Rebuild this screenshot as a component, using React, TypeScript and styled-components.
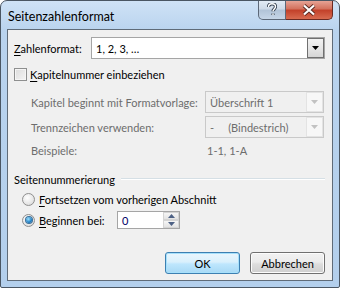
import React from 'react';
import styled, { createGlobalStyle } from 'styled-components';

const GlobalStyle = createGlobalStyle`
	html, body {
		margin: 0;
		padding: 0;
		background: #ffffff;
	}
	body {
		font-family: Lato, "Noto Sans", sans-serif;
		font-size: 11px;
		color: #000;
	}
`;

const Window = styled.div`
	width: 340px;
	height: 288px;
	box-sizing: border-box;
	border: 1px solid #4a5663;
	border-radius: 7px 7px 2px 2px;
	background: linear-gradient(180deg, #cfe2f6 0%, #b9d3ee 30px, #b3cfec 100%);
	padding: 0 6px 6px 6px;
	display: flex;
	flex-direction: column;
	overflow: hidden;
`;

const TitleBar = styled.div`
	height: 28px;
	display: flex;
	align-items: flex-start;
	justify-content: space-between;
	flex-shrink: 0;
`;

const TitleText = styled.div`
	align-self: center;
	margin-left: 1px;
	margin-top: 2px;
	font-size: 12.5px;
	color: #000;
`;

const CaptionButtons = styled.div`
	display: flex;
	margin-top: -1px;
`;

const CaptionButton = styled.div<{ $close?: boolean }>`
	height: 20px;
	width: ${(p) => (p.$close ? '47px' : '28px')};
	box-sizing: border-box;
	border: 1px solid ${(p) => (p.$close ? '#6b2a22' : '#5c6878')};
	border-top: none;
	border-radius: ${(p) => (p.$close ? '0 0 5px 0' : '0 0 0 5px')};
	${(p) => (p.$close ? 'border-left: none;' : '')}
	background: ${(p) =>
		p.$close
			? 'linear-gradient(180deg, #e9a99c 0%, #d4735f 45%, #c3422b 55%, #d86b50 100%)'
			: 'linear-gradient(180deg, #e4edf6 0%, #cfdbe8 45%, #b2c4d8 55%, #c6d6e8 100%)'};
	display: flex;
	align-items: center;
	justify-content: center;
`;

const Client = styled.div`
	flex: 1;
	border: 1px solid #5f6b78;
	background: #f0f0f0;
	padding: 0 7px 0 6px;
	display: flex;
	flex-direction: column;
`;

const FormatRow = styled.div`
	margin-top: 7px;
	height: 22px;
	display: flex;
	align-items: center;
`;

const Label = styled.span<{ $disabled?: boolean; $width?: number }>`
	color: ${(p) => (p.$disabled ? '#6d6d6d' : '#000')};
	${(p) => (p.$width ? `width: ${p.$width}px; flex-shrink: 0;` : '')}
	white-space: nowrap;
`;

const Key = styled.span`
	text-decoration: underline;
	text-underline-offset: 2px;
`;

const Combo = styled.div<{ $disabled?: boolean }>`
	flex: 1;
	height: 22px;
	box-sizing: border-box;
	border: 1px solid ${(p) => (p.$disabled ? '#c9c9c9' : '#a5a5a5')};
	background: ${(p) => (p.$disabled ? '#f0f0f0' : '#ffffff')};
	color: ${(p) => (p.$disabled ? '#6d6d6d' : '#000')};
	display: flex;
	align-items: center;
	padding-left: 4px;
	white-space: nowrap;
`;

const ComboText = styled.span`
	flex: 1;
`;

const DropButton = styled.div<{ $disabled?: boolean }>`
	width: 17px;
	height: 20px;
	box-sizing: border-box;
	border: 1px solid ${(p) => (p.$disabled ? '#e3e3e3' : '#707070')};
	background: ${(p) =>
		p.$disabled ? '#f7f7f7' : 'linear-gradient(180deg, #f2f2f2 0%, #e6e6e6 50%, #d6d6d6 100%)'};
	display: flex;
	align-items: center;
	justify-content: center;
`;

const CheckRow = styled.div`
	margin-top: 7px;
	height: 16px;
	display: flex;
	align-items: center;
	gap: 3px;
`;

const CheckBox = styled.div`
	width: 13px;
	height: 13px;
	box-sizing: border-box;
	border: 1px solid #8e8f8f;
	background: linear-gradient(135deg, #dcdcdc 0%, #f4f4f4 100%);
	box-shadow: inset 0 0 0 1px #f5f5f5;
	flex-shrink: 0;
`;

const ChapterGrid = styled.div`
	margin-top: 9px;
	margin-left: 17px;
	display: grid;
	grid-template-columns: 174px 119px;
	grid-template-rows: 22px 22px 18px;
	row-gap: 3px;
	align-items: center;
`;

const Examples = styled.span`
	color: #6d6d6d;
	padding-left: 2px;
`;

const GroupHeader = styled.div`
	margin-top: 12px;
	height: 16px;
	display: flex;
	align-items: center;
	gap: 6px;
`;

const GroupLine = styled.div`
	flex: 1;
	height: 0;
	border-top: 1px solid #d5dfe5;
	border-bottom: 1px solid #ffffff;
`;

const RadioRow = styled.div<{ $top: number; $height: number }>`
	margin-top: ${(p) => p.$top}px;
	margin-left: 8px;
	height: ${(p) => p.$height}px;
	display: flex;
	align-items: center;
	gap: 4px;
`;

const Radio = styled.div<{ $checked?: boolean }>`
	width: 13px;
	height: 13px;
	box-sizing: border-box;
	border-radius: 50%;
	border: 1px solid #8f8f8f;
	background: radial-gradient(circle at 40% 35%, #ffffff 0%, #e6e6e6 60%, #cfcfcf 100%);
	display: flex;
	align-items: center;
	justify-content: center;
	flex-shrink: 0;

	&::after {
		content: '';
		display: ${(p) => (p.$checked ? 'block' : 'none')};
		width: 6px;
		height: 6px;
		border-radius: 50%;
		background: radial-gradient(circle at 40% 35%, #9fe3ff 0%, #1f7fc4 60%, #0c4d8a 100%);
		box-shadow: 0 0 0 1px #3a6f99;
	}
`;

const SpinBox = styled.div`
	width: 63px;
	height: 18px;
	box-sizing: border-box;
	border: 1px solid #a5a5a5;
	background: #ffffff;
	display: flex;
	align-items: center;
`;

const SpinValue = styled.span`
	flex: 1;
	padding-left: 4px;
	color: #000066;
`;

const SpinButtons = styled.div`
	width: 16px;
	height: 16px;
	display: flex;
	flex-direction: column;
`;

const SpinButton = styled.div`
	flex: 1;
	box-sizing: border-box;
	border: 1px solid #d4d4d4;
	background: linear-gradient(180deg, #f6f6f6 0%, #e3e3e3 100%);
	display: flex;
	align-items: center;
	justify-content: center;
`;

const ButtonRow = styled.div`
	margin-top: 23px;
	display: flex;
	justify-content: flex-end;
	gap: 10px;
`;

const Button = styled.div<{ $default?: boolean }>`
	width: 75px;
	height: 22px;
	box-sizing: border-box;
	border: 1px solid ${(p) => (p.$default ? '#3c7fb1' : '#707070')};
	border-radius: 3px;
	background: ${(p) =>
		p.$default
			? 'linear-gradient(180deg, #eaf6fd 0%, #d9f0fc 45%, #bee6fd 55%, #a7d9f5 100%)'
			: 'linear-gradient(180deg, #f2f2f2 0%, #ebebeb 45%, #dddddd 55%, #cfcfcf 100%)'};
	box-shadow: inset 0 0 0 1px ${(p) => (p.$default ? '#a6e0fb' : '#fcfcfc')};
	display: flex;
	align-items: center;
	justify-content: center;
`;

const Arrow = ({ color = '#000' }: { color?: string }) => (
	<svg width="7" height="4" viewBox="0 0 7 4">
		<path d="M0 0h7L3.5 4z" fill={color} />
	</svg>
);

const SpinArrow = ({ up }: { up?: boolean }) => (
	<svg width="7" height="4" viewBox="0 0 7 4">
		<path d={up ? 'M0 4h7L3.5 0z' : 'M0 0h7L3.5 4z'} fill="#4d6185" />
	</svg>
);

const App = () => {
	return (
		<>
			<GlobalStyle />
			<Window>
				<TitleBar>
					<TitleText>Seitenzahlenformat</TitleText>
					<CaptionButtons>
						<CaptionButton>
							<svg width="10" height="13" viewBox="0 0 10 13">
								<path
									d="M1.5 4 C1.5 1.5 3 0.8 5 0.8 C7.3 0.8 8.5 2 8.5 3.8 C8.5 5.8 6 6.2 6 8.2 M6 10.5v1.5"
									stroke="#3a4655"
									strokeWidth="3.2"
									fill="none"
								/>
								<path
									d="M1.5 4 C1.5 1.5 3 0.8 5 0.8 C7.3 0.8 8.5 2 8.5 3.8 C8.5 5.8 6 6.2 6 8.2 M6 10.5v1.5"
									stroke="#ffffff"
									strokeWidth="1.4"
									fill="none"
								/>
							</svg>
						</CaptionButton>
						<CaptionButton $close>
							<svg width="14" height="12" viewBox="0 0 14 12">
								<path d="M2 1.5L12 10.5M12 1.5L2 10.5" stroke="#5a2a22" strokeWidth="4" />
								<path d="M2 1.5L12 10.5M12 1.5L2 10.5" stroke="#ffffff" strokeWidth="2.2" />
							</svg>
						</CaptionButton>
					</CaptionButtons>
				</TitleBar>
				<Client>
					<FormatRow>
						<Label $width={77}>
							<Key>Z</Key>ahlenformat:
						</Label>
						<Combo>
							<ComboText>1, 2, 3, …</ComboText>
							<DropButton>
								<Arrow />
							</DropButton>
						</Combo>
					</FormatRow>
					<CheckRow>
						<CheckBox />
						<Label>
							<Key>K</Key>apitelnummer einbeziehen
						</Label>
					</CheckRow>
					<ChapterGrid>
						<Label $disabled>Kapitel beginnt mit Formatvorlage:</Label>
						<Combo $disabled>
							<ComboText>Überschrift 1</ComboText>
							<DropButton $disabled>
								<Arrow color="#c2c2c2" />
							</DropButton>
						</Combo>
						<Label $disabled>Trennzeichen verwenden:</Label>
						<Combo $disabled>
							<ComboText>-&nbsp;&nbsp;&nbsp;&nbsp;&nbsp;(Bindestrich)</ComboText>
							<DropButton $disabled>
								<Arrow color="#c2c2c2" />
							</DropButton>
						</Combo>
						<Label $disabled>Beispiele:</Label>
						<Examples>1-1, 1-A</Examples>
					</ChapterGrid>
					<GroupHeader>
						<Label>Seitennummerierung</Label>
						<GroupLine />
					</GroupHeader>
					<RadioRow $top={4} $height={16}>
						<Radio />
						<Label>
							<Key>F</Key>ortsetzen vom vorherigen Abschnitt
						</Label>
					</RadioRow>
					<RadioRow $top={4} $height={18}>
						<Radio $checked />
						<Label $width={74}>
							<Key>B</Key>eginnen bei:
						</Label>
						<SpinBox>
							<SpinValue>0</SpinValue>
							<SpinButtons>
								<SpinButton>
									<SpinArrow up />
								</SpinButton>
								<SpinButton>
									<SpinArrow />
								</SpinButton>
							</SpinButtons>
						</SpinBox>
					</RadioRow>
					<ButtonRow>
						<Button $default>OK</Button>
						<Button>Abbrechen</Button>
					</ButtonRow>
				</Client>
			</Window>
		</>
	);
};

export default App;
